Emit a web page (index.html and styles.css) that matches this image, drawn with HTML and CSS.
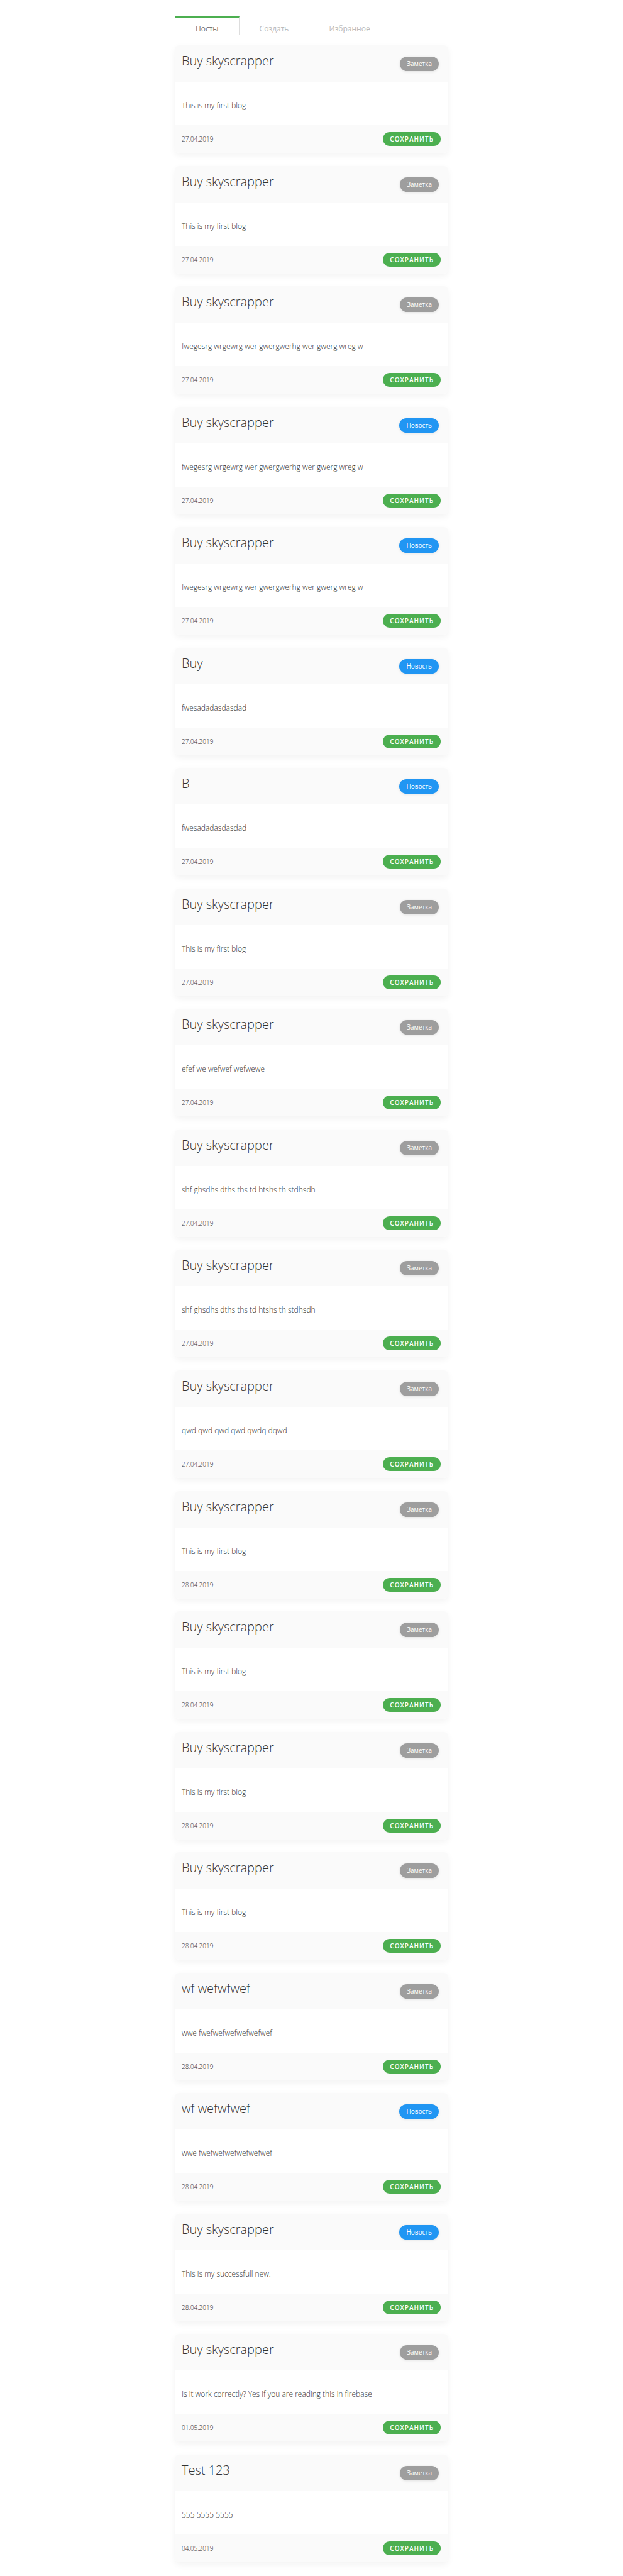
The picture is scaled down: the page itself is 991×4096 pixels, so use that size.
FILE: index.html
```html
<!DOCTYPE html>
<html lang="ru">
<head>
<meta charset="utf-8">
<meta name="viewport" content="width=device-width, initial-scale=1">
<title>Посты</title>
<link rel="stylesheet" href="styles.css">
</head>
<body>
<main class="page">
  <nav class="tabs">
    <a class="tab tab-active" href="#posts">Посты</a>
    <a class="tab" href="#create">Создать</a>
    <a class="tab" href="#favorites">Избранное</a>
  </nav>
  <section class="posts" id="posts">
    <article class="card">
      <header class="card-header"><h2 class="card-title">Buy skyscrapper</h2><span class="badge badge-note">Заметка</span></header>
      <p class="card-body">This is my first blog</p>
      <footer class="card-footer"><time class="date">27.04.2019</time><button class="save" type="button">Сохранить</button></footer>
    </article>
    <article class="card">
      <header class="card-header"><h2 class="card-title">Buy skyscrapper</h2><span class="badge badge-note">Заметка</span></header>
      <p class="card-body">This is my first blog</p>
      <footer class="card-footer"><time class="date">27.04.2019</time><button class="save" type="button">Сохранить</button></footer>
    </article>
    <article class="card">
      <header class="card-header"><h2 class="card-title">Buy skyscrapper</h2><span class="badge badge-note">Заметка</span></header>
      <p class="card-body">fwegesrg wrgewrg wer gwergwerhg wer gwerg wreg w</p>
      <footer class="card-footer"><time class="date">27.04.2019</time><button class="save" type="button">Сохранить</button></footer>
    </article>
    <article class="card">
      <header class="card-header"><h2 class="card-title">Buy skyscrapper</h2><span class="badge badge-news">Новость</span></header>
      <p class="card-body">fwegesrg wrgewrg wer gwergwerhg wer gwerg wreg w</p>
      <footer class="card-footer"><time class="date">27.04.2019</time><button class="save" type="button">Сохранить</button></footer>
    </article>
    <article class="card">
      <header class="card-header"><h2 class="card-title">Buy skyscrapper</h2><span class="badge badge-news">Новость</span></header>
      <p class="card-body">fwegesrg wrgewrg wer gwergwerhg wer gwerg wreg w</p>
      <footer class="card-footer"><time class="date">27.04.2019</time><button class="save" type="button">Сохранить</button></footer>
    </article>
    <article class="card">
      <header class="card-header"><h2 class="card-title">Buy</h2><span class="badge badge-news">Новость</span></header>
      <p class="card-body">fwesadadasdasdad</p>
      <footer class="card-footer"><time class="date">27.04.2019</time><button class="save" type="button">Сохранить</button></footer>
    </article>
    <article class="card">
      <header class="card-header"><h2 class="card-title">B</h2><span class="badge badge-news">Новость</span></header>
      <p class="card-body">fwesadadasdasdad</p>
      <footer class="card-footer"><time class="date">27.04.2019</time><button class="save" type="button">Сохранить</button></footer>
    </article>
    <article class="card">
      <header class="card-header"><h2 class="card-title">Buy skyscrapper</h2><span class="badge badge-note">Заметка</span></header>
      <p class="card-body">This is my first blog</p>
      <footer class="card-footer"><time class="date">27.04.2019</time><button class="save" type="button">Сохранить</button></footer>
    </article>
    <article class="card">
      <header class="card-header"><h2 class="card-title">Buy skyscrapper</h2><span class="badge badge-note">Заметка</span></header>
      <p class="card-body">efef we wefwef wefwewe</p>
      <footer class="card-footer"><time class="date">27.04.2019</time><button class="save" type="button">Сохранить</button></footer>
    </article>
    <article class="card">
      <header class="card-header"><h2 class="card-title">Buy skyscrapper</h2><span class="badge badge-note">Заметка</span></header>
      <p class="card-body">shf ghsdhs dths ths td htshs th stdhsdh</p>
      <footer class="card-footer"><time class="date">27.04.2019</time><button class="save" type="button">Сохранить</button></footer>
    </article>
    <article class="card">
      <header class="card-header"><h2 class="card-title">Buy skyscrapper</h2><span class="badge badge-note">Заметка</span></header>
      <p class="card-body">shf ghsdhs dths ths td htshs th stdhsdh</p>
      <footer class="card-footer"><time class="date">27.04.2019</time><button class="save" type="button">Сохранить</button></footer>
    </article>
    <article class="card">
      <header class="card-header"><h2 class="card-title">Buy skyscrapper</h2><span class="badge badge-note">Заметка</span></header>
      <p class="card-body">qwd qwd qwd qwd qwdq dqwd</p>
      <footer class="card-footer"><time class="date">27.04.2019</time><button class="save" type="button">Сохранить</button></footer>
    </article>
    <article class="card">
      <header class="card-header"><h2 class="card-title">Buy skyscrapper</h2><span class="badge badge-note">Заметка</span></header>
      <p class="card-body">This is my first blog</p>
      <footer class="card-footer"><time class="date">28.04.2019</time><button class="save" type="button">Сохранить</button></footer>
    </article>
    <article class="card">
      <header class="card-header"><h2 class="card-title">Buy skyscrapper</h2><span class="badge badge-note">Заметка</span></header>
      <p class="card-body">This is my first blog</p>
      <footer class="card-footer"><time class="date">28.04.2019</time><button class="save" type="button">Сохранить</button></footer>
    </article>
    <article class="card">
      <header class="card-header"><h2 class="card-title">Buy skyscrapper</h2><span class="badge badge-note">Заметка</span></header>
      <p class="card-body">This is my first blog</p>
      <footer class="card-footer"><time class="date">28.04.2019</time><button class="save" type="button">Сохранить</button></footer>
    </article>
    <article class="card">
      <header class="card-header"><h2 class="card-title">Buy skyscrapper</h2><span class="badge badge-note">Заметка</span></header>
      <p class="card-body">This is my first blog</p>
      <footer class="card-footer"><time class="date">28.04.2019</time><button class="save" type="button">Сохранить</button></footer>
    </article>
    <article class="card">
      <header class="card-header"><h2 class="card-title">wf wefwfwef</h2><span class="badge badge-note">Заметка</span></header>
      <p class="card-body">wwe fwefwefwefwefwefwef</p>
      <footer class="card-footer"><time class="date">28.04.2019</time><button class="save" type="button">Сохранить</button></footer>
    </article>
    <article class="card">
      <header class="card-header"><h2 class="card-title">wf wefwfwef</h2><span class="badge badge-news">Новость</span></header>
      <p class="card-body">wwe fwefwefwefwefwefwef</p>
      <footer class="card-footer"><time class="date">28.04.2019</time><button class="save" type="button">Сохранить</button></footer>
    </article>
    <article class="card">
      <header class="card-header"><h2 class="card-title">Buy skyscrapper</h2><span class="badge badge-news">Новость</span></header>
      <p class="card-body">This is my successfull new.</p>
      <footer class="card-footer"><time class="date">28.04.2019</time><button class="save" type="button">Сохранить</button></footer>
    </article>
    <article class="card">
      <header class="card-header"><h2 class="card-title">Buy skyscrapper</h2><span class="badge badge-note">Заметка</span></header>
      <p class="card-body">Is it work correctly? Yes if you are reading this in firebase</p>
      <footer class="card-footer"><time class="date">01.05.2019</time><button class="save" type="button">Сохранить</button></footer>
    </article>
    <article class="card">
      <header class="card-header"><h2 class="card-title">Test 123</h2><span class="badge badge-note">Заметка</span></header>
      <p class="card-body">555 5555 5555</p>
      <footer class="card-footer"><time class="date">04.05.2019</time><button class="save" type="button">Сохранить</button></footer>
    </article>
  </section>
</main>
</body>
</html>
```
FILE: styles.css
```css
* {
  box-sizing: border-box;
}

body {
  margin: 0;
  background: #fff;
  color: #333;
  font-family: "Open Sans", "Noto Sans", sans-serif;
  font-size: 12px;
  font-weight: 300;
  line-height: 16px;
}

.page {
  display: flex;
  flex-direction: column;
  gap: 16px;
  max-width: 435px;
  min-height: 100vh;
  margin: 0 auto;
  padding: 26px 0 22px;
}

.tabs {
  display: flex;
}

.tab {
  padding: 12px 32px 1px;
  height: 30px;
  border-bottom: 1px solid #ddd;
  color: #bbb;
  font-weight: 400;
  text-decoration: none;
}

.tab-active {
  padding-top: 10px;
  border: 1px solid #ddd;
  border-top: 2px solid #4caf50;
  border-bottom: 0;
  color: #777;
}

.posts {
  flex: 1;
  display: flex;
  flex-direction: column;
  justify-content: space-between;
}

.card {
  border-radius: 7px;
  background: #fff;
  box-shadow: 0 4px 11px rgba(0, 0, 0, 0.05);
  overflow: hidden;
}

.card-header {
  display: flex;
  justify-content: space-between;
  align-items: flex-start;
  padding: 11px 15px 11px 11px;
  height: 58px;
  background: #fafafa;
}

.card-title {
  margin: 0;
  font-size: 20px;
  font-weight: 300;
  line-height: 28px;
}

.badge {
  margin-top: 7px;
  padding: 0 11px;
  border-radius: 12px;
  box-shadow: 0 1px 4px rgba(0, 0, 0, 0.1);
  color: #fff;
  font-size: 10px;
  font-weight: 400;
  line-height: 23px;
}

.badge-note {
  background: #9e9e9e;
}

.badge-news {
  background: #2196f3;
}

.card-body {
  margin: 0;
  padding: 30px 11px 23px;
}

.card-footer {
  display: flex;
  justify-content: space-between;
  align-items: center;
  padding: 11px 12px 11px 11px;
  background: #fafafa;
}

.date {
  font-size: 10px;
}

.save {
  padding: 0 11px;
  border: 0;
  border-radius: 11px;
  background: #4caf50;
  color: #fff;
  font-family: inherit;
  font-size: 10px;
  font-weight: 600;
  letter-spacing: 1px;
  line-height: 22px;
  text-transform: uppercase;
}
```
